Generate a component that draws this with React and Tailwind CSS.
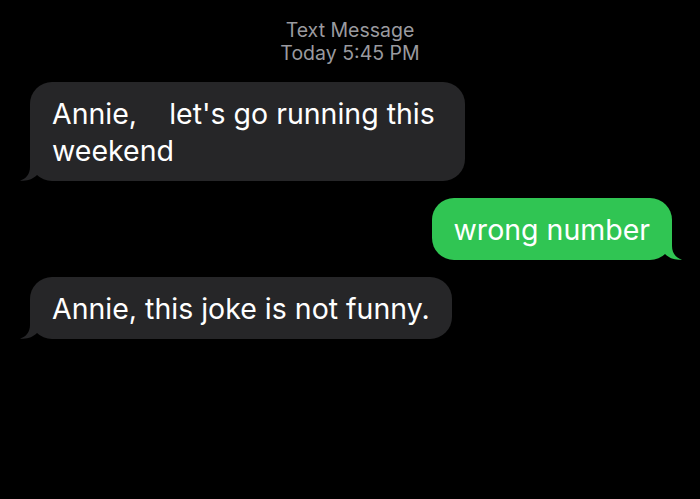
const TAIL_PATH = "M10 0 L10 8 C10 15 6 20 0 21.5 C7 22.5 13 20 17 16 L24 16 L24 0 Z";

function Bubble({ children, sent, className = "" }) {
  const color = sent ? "#30c553" : "#262628";
  return (
    <div
      className={`relative rounded-[22px] px-[22px] py-[12.5px] text-[28.5px] leading-[37px] text-white whitespace-pre-wrap ${
        sent ? "bg-[#30c553]" : "bg-[#262628]"
      } ${className}`}
    >
      {children}
      <svg
        className={`absolute bottom-0 w-[24px] h-[22px] ${sent ? "-right-[10px] -scale-x-100" : "-left-[10px]"}`}
        viewBox="0 0 24 22"
      >
        <path d={TAIL_PATH} fill={color} />
      </svg>
    </div>
  );
}

export default function App() {
  return (
    <div className="w-[700px] h-[499px] bg-black overflow-hidden font-['Inter','Liberation_Sans',sans-serif]">
      {/* Header */}
      <div className="pt-[19px] text-center text-[19.5px] leading-[23px] text-[#9a9a9f]">
        <div>Text Message</div>
        <div>Today 5:45 PM</div>
      </div>

      <div className="flex flex-col gap-[17px] mt-[17px] px-[28px]">
        <div className="flex justify-start pl-[2px]">
          <Bubble className="w-[435px]">{"Annie,    let's go running this weekend"}</Bubble>
        </div>
        <div className="flex justify-end">
          <Bubble sent>wrong number</Bubble>
        </div>
        <div className="flex justify-start pl-[2px]">
          <Bubble>Annie, this joke is not funny.</Bubble>
        </div>
      </div>
    </div>
  );
}
